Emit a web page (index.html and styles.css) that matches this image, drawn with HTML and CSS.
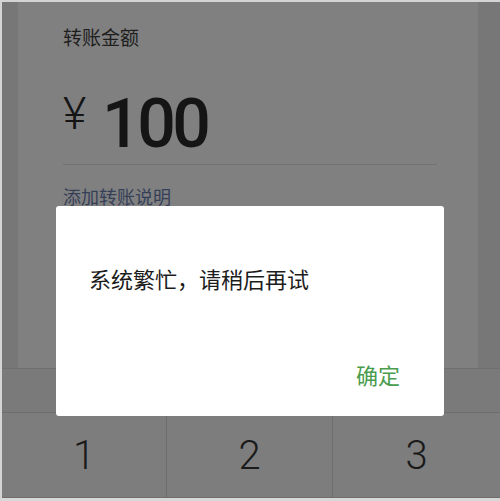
FILE: index.html
```html
<!DOCTYPE html>
<html lang="zh-CN">
<head>
<meta charset="utf-8">
<link rel="stylesheet" href="styles.css">
</head>
<body>
<div class="page">
  <div class="card">
    <div class="label">转账金额</div>
    <div class="amount">
      <span class="yen">¥</span>
      <span class="num">100</span>
    </div>
    <div class="divider"></div>
    <div class="note">添加转账说明</div>
  </div>
  <div class="band"></div>
  <div class="keys">
    <div class="key">1</div>
    <div class="key">2</div>
    <div class="key">3</div>
  </div>
</div>
<div class="dialog">
  <div class="msg">系统繁忙，请稍后再试</div>
  <div class="actions"><span class="ok">确定</span></div>
</div>
</body>
</html>
```
FILE: styles.css
```css
html, body {
  margin: 0;
  padding: 0;
}
body {
  width: 500px;
  height: 501px;
  box-sizing: border-box;
  border-top: 2px solid #d4d4d4;
  border-left: 2px solid #d4d4d4;
  border-bottom: 3px solid #d8d8d8;
  background: #777777;
  font-family: "Noto Sans CJK SC", "Noto Sans", sans-serif;
  position: relative;
  overflow: hidden;
}
.page {
  display: flex;
  flex-direction: column;
  height: 100%;
}
.card {
  margin: 0 22px 0 16px;
  height: 366px;
  background: #808080;
  padding: 22px 41px 0 45px;
  box-sizing: border-box;
  display: flex;
  flex-direction: column;
}
.label {
  font-size: 19px;
  line-height: 26px;
  color: #1e1e1e;
}
.amount {
  display: flex;
  align-items: flex-start;
  margin-top: 39px;
  height: 75px;
}
.yen {
  font-family: Roboto, "Noto Sans", sans-serif;
  font-weight: 300;
  font-size: 45px;
  line-height: 45px;
  color: #141414;
  margin-top: 2px;
  width: 39px;
}
.num {
  font-family: Roboto, sans-serif;
  font-weight: 500;
  font-size: 68px;
  line-height: 56px;
  letter-spacing: -3.5px;
  color: #151515;
  margin-top: 7px;
}
.divider {
  height: 1px;
  background: #727272;
}
.note {
  margin-top: 19px;
  font-size: 18px;
  line-height: 24px;
  color: #353f58;
}
.band {
  height: 44px;
  border-top: 1px solid #6f6f6f;
  background: #7a7a7a;
  box-sizing: border-box;
}
.keys {
  display: grid;
  grid-template-columns: 165px 166px 1fr;
  height: 84px;
  border-top: 1px solid #6e6e6e;
  border-bottom: 1px solid #6e6e6e;
  background: #7d7d7d;
}
.key {
  display: flex;
  align-items: center;
  justify-content: center;
  font-family: Roboto, sans-serif;
  font-weight: 300;
  font-size: 40px;
  color: #1a1a1a;
  border-right: 1px solid #6e6e6e;
}
.key:last-child {
  border-right: none;
}
.dialog {
  position: absolute;
  left: 54px;
  top: 204px;
  width: 388px;
  height: 210px;
  background: #ffffff;
  border-radius: 3px;
  box-sizing: border-box;
  padding: 56px 44px 0 33px;
  display: flex;
  flex-direction: column;
}
.msg {
  font-size: 22px;
  line-height: 32px;
  color: #1c1c1c;
}
.actions {
  margin-top: auto;
  margin-bottom: 27px;
  display: flex;
  justify-content: flex-end;
}
.ok {
  font-size: 22px;
  line-height: 30px;
  color: #4a9c4e;
}
```
